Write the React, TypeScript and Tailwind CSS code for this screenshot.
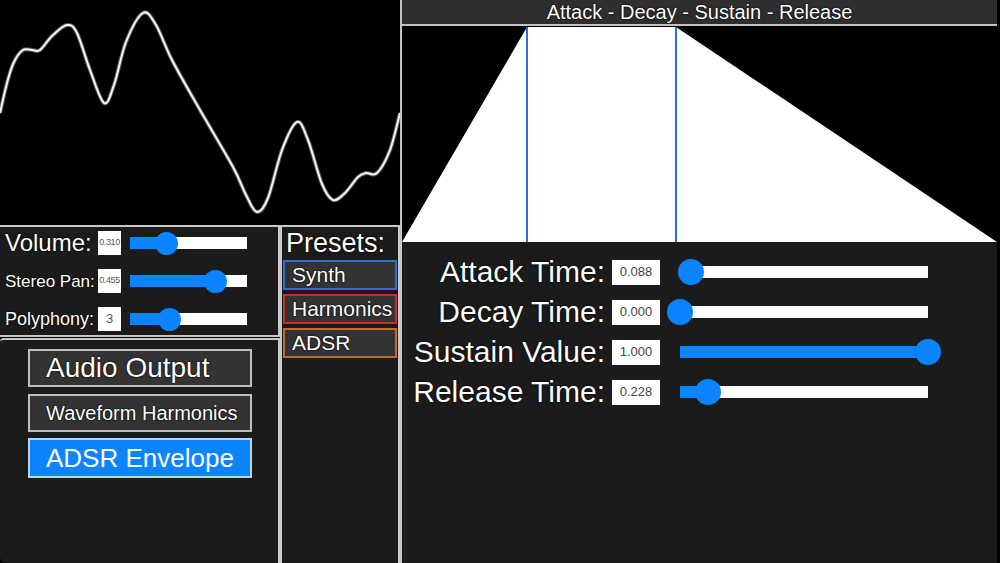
const WAVE_POINTS: [number, number][] = [
  [0, 113], [7, 83], [14, 62], [23, 50], [32, 50], [40, 50], [52, 36], [67, 25], [77, 33],
  [90, 70], [104, 103], [114, 85], [126, 42], [143, 13], [156, 25], [172, 60], [200, 110],
  [233, 167], [246, 195], [257, 212], [268, 198], [282, 150], [297, 122], [308, 140],
  [322, 184], [333, 200], [345, 193], [358, 177], [366, 173], [377, 173], [390, 150], [400, 113],
];

// catmull-rom -> cubic bezier
function smoothPath(pts: [number, number][]) {
  let d = `M ${pts[0][0]} ${pts[0][1]}`;
  for (let i = 0; i < pts.length - 1; i++) {
    const p0 = pts[i - 1] || pts[i];
    const p1 = pts[i];
    const p2 = pts[i + 1];
    const p3 = pts[i + 2] || p2;
    const c1x = p1[0] + (p2[0] - p0[0]) / 6;
    const c1y = p1[1] + (p2[1] - p0[1]) / 6;
    const c2x = p2[0] - (p3[0] - p1[0]) / 6;
    const c2y = p2[1] - (p3[1] - p1[1]) / 6;
    d += ` C ${c1x.toFixed(1)} ${c1y.toFixed(1)}, ${c2x.toFixed(1)} ${c2y.toFixed(1)}, ${p2[0]} ${p2[1]}`;
  }
  return d;
}

const FONT = { fontFamily: '"Liberation Sans", Arial, sans-serif' };

function Slider({ pct, width, thumb }: { pct: number; width: number; thumb: number }) {
  return (
    <div className="relative h-[12px] bg-white" style={{ width }}>
      <div className="h-full bg-[#0a84ff]" style={{ width: pct * width }} />
      <div
        className="absolute top-1/2 rounded-full bg-[#0a84ff]"
        style={{
          width: thumb,
          height: thumb,
          left: pct * width - thumb / 2,
          marginTop: -thumb / 2,
        }}
      />
    </div>
  );
}

const LEFT_CONTROLS = [
  { label: 'Volume:', size: 'text-[24px]', value: '0.310', pct: 0.31 },
  { label: 'Stereo Pan:', size: 'text-[17px]', value: '0.455', pct: 0.7275 },
  { label: 'Polyphony:', size: 'text-[18px]', value: '3', pct: 0.34 },
];

const ADSR_CONTROLS = [
  { label: 'Attack Time:', value: '0.088', pct: 0.044 },
  { label: 'Decay Time:', value: '0.000', pct: 0 },
  { label: 'Sustain Value:', value: '1.000', pct: 1 },
  { label: 'Release Time:', value: '0.228', pct: 0.114 },
];

const PRESETS = [
  { name: 'Synth', border: 'border-[#2f6fd0]' },
  { name: 'Harmonics', border: 'border-[#c4302a]' },
  { name: 'ADSR', border: 'border-[#c46a2c]' },
];

const shadow = '[text-shadow:0_0_2px_#000,0_0_1px_#000]';

export default function App() {
  return (
    <div className="flex h-[563px] w-[1000px] overflow-hidden bg-black text-white" style={FONT}>
      {/* Left column */}
      <div className="flex w-[400px] flex-col">
        {/* waveform */}
        <div className="h-[225px] bg-black">
          <svg width="400" height="225" viewBox="0 0 400 225">
            <path d={smoothPath(WAVE_POINTS)} fill="none" stroke="#5a5a5a" strokeWidth="4" />
            <path d={smoothPath(WAVE_POINTS)} fill="none" stroke="#f4f4f4" strokeWidth="2" />
          </svg>
        </div>

        <div className="flex h-[338px]">
          <div className="flex w-[280px] flex-col">
            {/* main controls */}
            <div className="flex h-[112px] flex-col gap-[12px] border-y-2 border-r-2 border-[#c9c9c9] bg-[#1b1b1b] pt-[3px]">
              {LEFT_CONTROLS.map((c) => (
                <div key={c.label} className="flex h-[26px] items-center pl-[5px]">
                  <div className={`w-[90px] whitespace-nowrap leading-none ${c.size} ${shadow}`}>{c.label}</div>
                  <div
                    className={`ml-[3px] flex h-[24px] w-[23px] items-center justify-center overflow-hidden bg-white text-[#555] ${
                      c.value === '3' ? 'text-[13px]' : 'text-[9px] tracking-[-0.4px]'
                    }`}
                  >
                    {c.value}
                  </div>
                  <div className="ml-[9px]">
                    <Slider pct={c.pct} width={117} thumb={23} />
                  </div>
                </div>
              ))}
            </div>
            {/* nav */}
            <div className="mt-[1px] flex flex-1 flex-col gap-[7px] rounded-tl-[4px] rounded-bl-[6px] border-t-2 border-r-2 border-[#c9c9c9] bg-[#1b1b1b] pl-[28px] pt-[9px]">
              <div className={`flex h-[38px] w-[224px] items-center border-2 border-[#bdbdbd] bg-[#333] pl-[16px] text-[28px] ${shadow}`}>
                Audio Output
              </div>
              <div className={`flex h-[38px] w-[224px] items-center border-2 border-[#bdbdbd] bg-[#333] pl-[16px] text-[20px] ${shadow}`}>
                Waveform Harmonics
              </div>
              <div className="-mt-[1px] flex h-[40px] w-[224px] items-center border-2 border-[#bcd3f0] bg-[#0a84ff] pl-[16px] text-[26px]">
                ADSR Envelope
              </div>
            </div>
          </div>

          {/* presets */}
          <div className="flex w-[120px] flex-col border-x-2 border-t-2 border-[#c9c9c9] bg-[#1b1b1b] px-[1px]">
            <div className={`h-[33px] pl-[3px] pt-[3px] text-[27px] leading-none ${shadow}`}>Presets:</div>
            <div className="flex flex-col gap-[4px]">
              {PRESETS.map((p) => (
                <div
                  key={p.name}
                  className={`flex h-[30px] w-[114px] items-center border-2 ${p.border} bg-[#333] pl-[7px] text-[21px] ${shadow}`}
                >
                  {p.name}
                </div>
              ))}
            </div>
          </div>
        </div>
      </div>

      {/* Right column */}
      <div className="flex w-[600px] flex-col border-l-2 border-r-[3px] border-[#c4c4c4] border-r-black">
        <div className={`flex h-[26px] items-center justify-center border-b-2 border-[#c4c4c4] bg-[#2e2e2e] text-[20px] ${shadow}`}>
          Attack - Decay - Sustain - Release
        </div>
        <div className="mt-[1px] h-[215px] bg-black">
          <svg width="595" height="215" viewBox="0 0 595 215">
            <polygon points="0,215 125,0 274,0 595,215" fill="#ffffff" />
            <line x1="125" y1="0" x2="125" y2="215" stroke="#2b6fd8" strokeWidth="2" />
            <line x1="274" y1="0" x2="274" y2="215" stroke="#2b6fd8" strokeWidth="2" />
          </svg>
        </div>
        <div className="flex flex-1 flex-col bg-[#1b1b1b] pt-[10px]">
          {ADSR_CONTROLS.map((c) => (
            <div key={c.label} className="flex h-[40px] items-center">
              <div className={`w-[203px] whitespace-nowrap text-right text-[30px] leading-none ${shadow}`}>{c.label}</div>
              <div className="ml-[7px] flex h-[25px] w-[48px] items-center justify-center bg-white text-[13px] text-[#444]">
                {c.value}
              </div>
              <div className="ml-[20px]">
                <Slider pct={c.pct} width={248} thumb={26} />
              </div>
            </div>
          ))}
        </div>
      </div>
    </div>
  );
}
